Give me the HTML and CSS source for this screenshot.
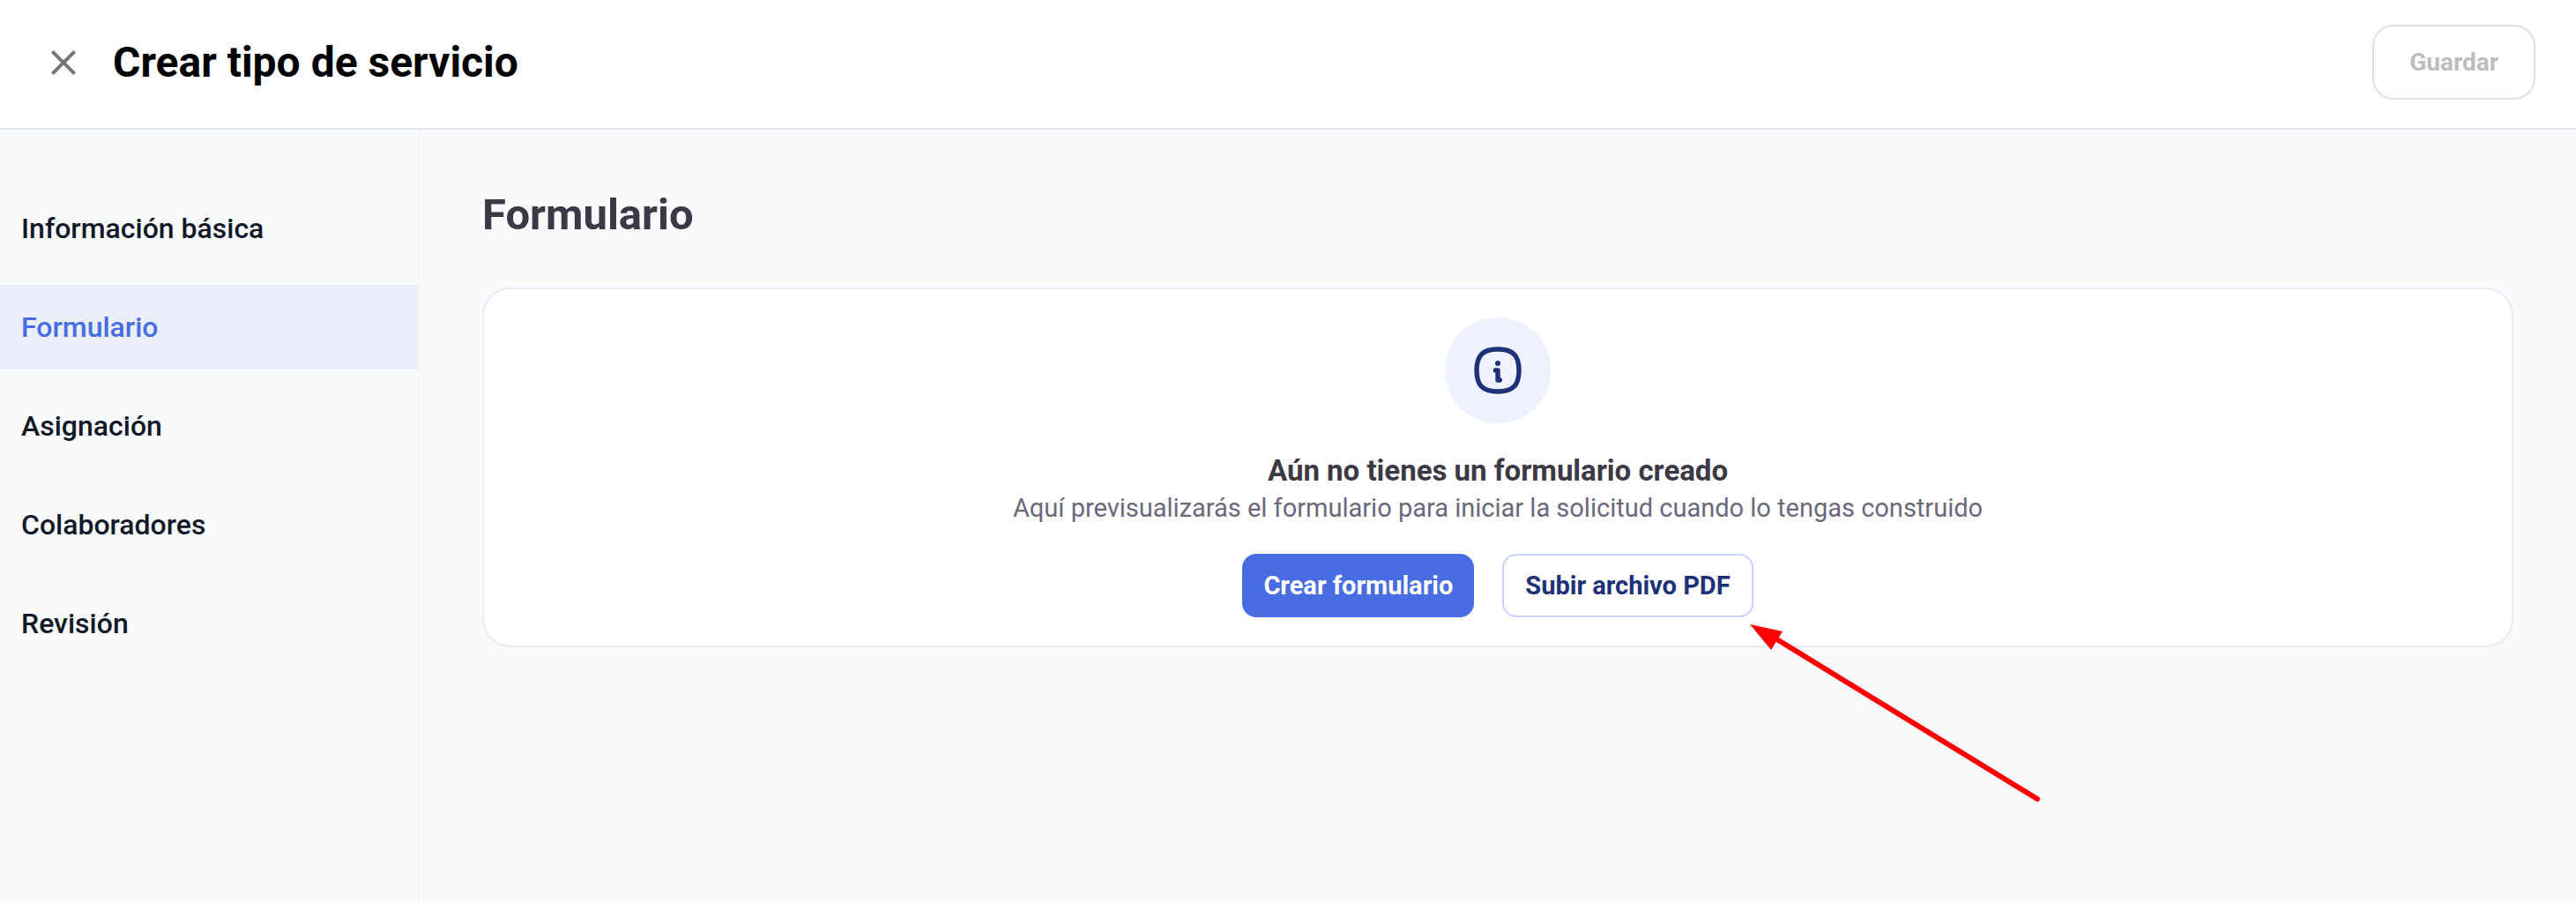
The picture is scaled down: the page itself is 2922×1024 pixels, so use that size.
FILE: index.html
```html
<!DOCTYPE html>
<html lang="es">

<head>
    <meta charset="UTF-8">
    <meta name="viewport" content="width=device-width, initial-scale=1.0">
    <title>Crear tipo de servicio</title>
    <link rel="stylesheet" href="styles.css">
</head>

<body>

    <header class="topbar">
        <button type="button" class="close-btn" aria-label="Cerrar">
            <svg viewBox="0 0 24 24" width="48" height="48">
                <path fill="currentColor" d="M19 6.41 17.59 5 12 10.59 6.41 5 5 6.41 10.59 12 5 17.59 6.41 19 12 13.41 17.59 19 19 17.59 13.41 12z" />
            </svg>
        </button>
        <h1>Crear tipo de servicio</h1>
        <button type="button" class="save-btn" disabled>Guardar</button>
    </header>

    <div class="layout">
        <!-- Steps -->
        <nav class="sidebar">
            <a href="#informacion">Información básica</a>
            <a href="#formulario" class="active">Formulario</a>
            <a href="#asignacion">Asignación</a>
            <a href="#colaboradores">Colaboradores</a>
            <a href="#revision">Revisión</a>
        </nav>

        <main class="content">
            <h2>Formulario</h2>

            <!-- Empty state -->
            <section class="card">
                <div class="icon-circle">
                    <svg viewBox="0 0 54 54" width="54" height="54" fill="none" stroke="currentColor" stroke-width="5.4" stroke-linecap="round" stroke-linejoin="round">
                        <path d="M27 3C44 3 51 10 51 27S44 51 27 51 3 44 3 27 10 3 27 3z" />
                        <path d="M24.400 27H27V38H29.300" />
                        <circle cx="27" cy="19" r="3" fill="currentColor" stroke="none" />
                    </svg>
                </div>
                <h3>Aún no tienes un formulario creado</h3>
                <p>Aquí previsualizarás el formulario para iniciar la solicitud cuando lo tengas construido</p>
                <div class="actions">
                    <button type="button" class="btn btn-primary">Crear formulario</button>
                    <div class="upload">
                        <button type="button" class="btn btn-outline">Subir archivo PDF</button>
                        <svg class="arrow" viewBox="0 0 340 210" width="340" height="210">
                            <path d="M24 21 326 206" fill="none" stroke="#ff0000" stroke-width="6" stroke-linecap="round" />
                            <path d="M0 8 37 16 24 37z" fill="#ff0000" />
                        </svg>
                    </div>
                </div>
            </section>
        </main>
    </div>

</body>

</html>
```
FILE: styles.css
```css
* {
    box-sizing: border-box;
}

body {
    font-family: Roboto, "Liberation Sans", sans-serif;
    display: flex;
    flex-direction: column;
    min-height: 100vh;
    margin: 0;
    background-color: #fafafc;
    color: #3b3945;
}

h1,
h2,
h3,
p {
    margin: 0;
}

button {
    font-family: inherit;
    cursor: pointer;
}

.topbar {
    display: flex;
    align-items: center;
    gap: 32px;
    padding: 28px 46px 32px 48px;
    background-color: #ffffff;
    border-bottom: 2px solid #e2e8ee;
}

.topbar h1 {
    flex: 1;
    font-size: 48px;
    font-weight: 700;
    line-height: 56px;
    color: #000000;
}

.close-btn {
    display: flex;
    padding: 0;
    border: none;
    background: none;
    color: #757575;
}

.save-btn {
    padding: 26px 40px;
    font-size: 28px;
    font-weight: 700;
    line-height: 29px;
    color: #bdbdbd;
    background-color: #ffffff;
    border: 2px solid #e0e0e0;
    border-radius: 24px;
    cursor: default;
}

.layout {
    display: flex;
    flex: 1;
}

.sidebar {
    display: flex;
    flex-direction: column;
    gap: 16px;
    width: 476px;
    padding-top: 64px;
    background-color: #f8fafc;
    border-right: 2px solid #f4f5f8;
}

.sidebar a {
    padding: 24px;
    font-size: 32px;
    font-weight: 500;
    line-height: 48px;
    color: #111827;
    text-decoration: none;
}

.sidebar a.active {
    background-color: #e9eef9;
    color: #486ce2;
}

.content {
    flex: 1;
    padding: 71px;
}

.content h2 {
    margin-bottom: 56px;
    font-size: 49px;
    font-weight: 700;
    line-height: 52px;
}

.card {
    display: flex;
    flex-direction: column;
    align-items: center;
    padding: 32px;
    background-color: #ffffff;
    border: 2px solid #eae9f4;
    border-radius: 32px;
    text-align: center;
}

.icon-circle {
    display: flex;
    align-items: center;
    justify-content: center;
    width: 120px;
    height: 120px;
    margin-bottom: 32px;
    border-radius: 50%;
    background-color: #eef2ff;
    color: #1e3178;
}

.card h3 {
    font-size: 33px;
    font-weight: 700;
    line-height: 44px;
}

.card p {
    font-size: 29px;
    line-height: 40px;
    color: #6b687d;
}

.actions {
    display: flex;
    gap: 32px;
    margin-top: 32px;
}

.btn {
    padding: 20px 24px;
    font-size: 29px;
    font-weight: 700;
    line-height: 32px;
    border: none;
    border-radius: 16px;
}

.btn-primary {
    background-color: #486ce2;
    color: #ffffff;
}

.btn-outline {
    padding: 18px 24px;
    background-color: #ffffff;
    border: 2px solid #c7d2fe;
    color: #1e3178;
}

.upload {
    position: relative;
}

/* Arrow that points at the upload button */
.arrow {
    position: absolute;
    top: 100%;
    left: 100%;
    margin-left: -4px;
    pointer-events: none;
}
```
